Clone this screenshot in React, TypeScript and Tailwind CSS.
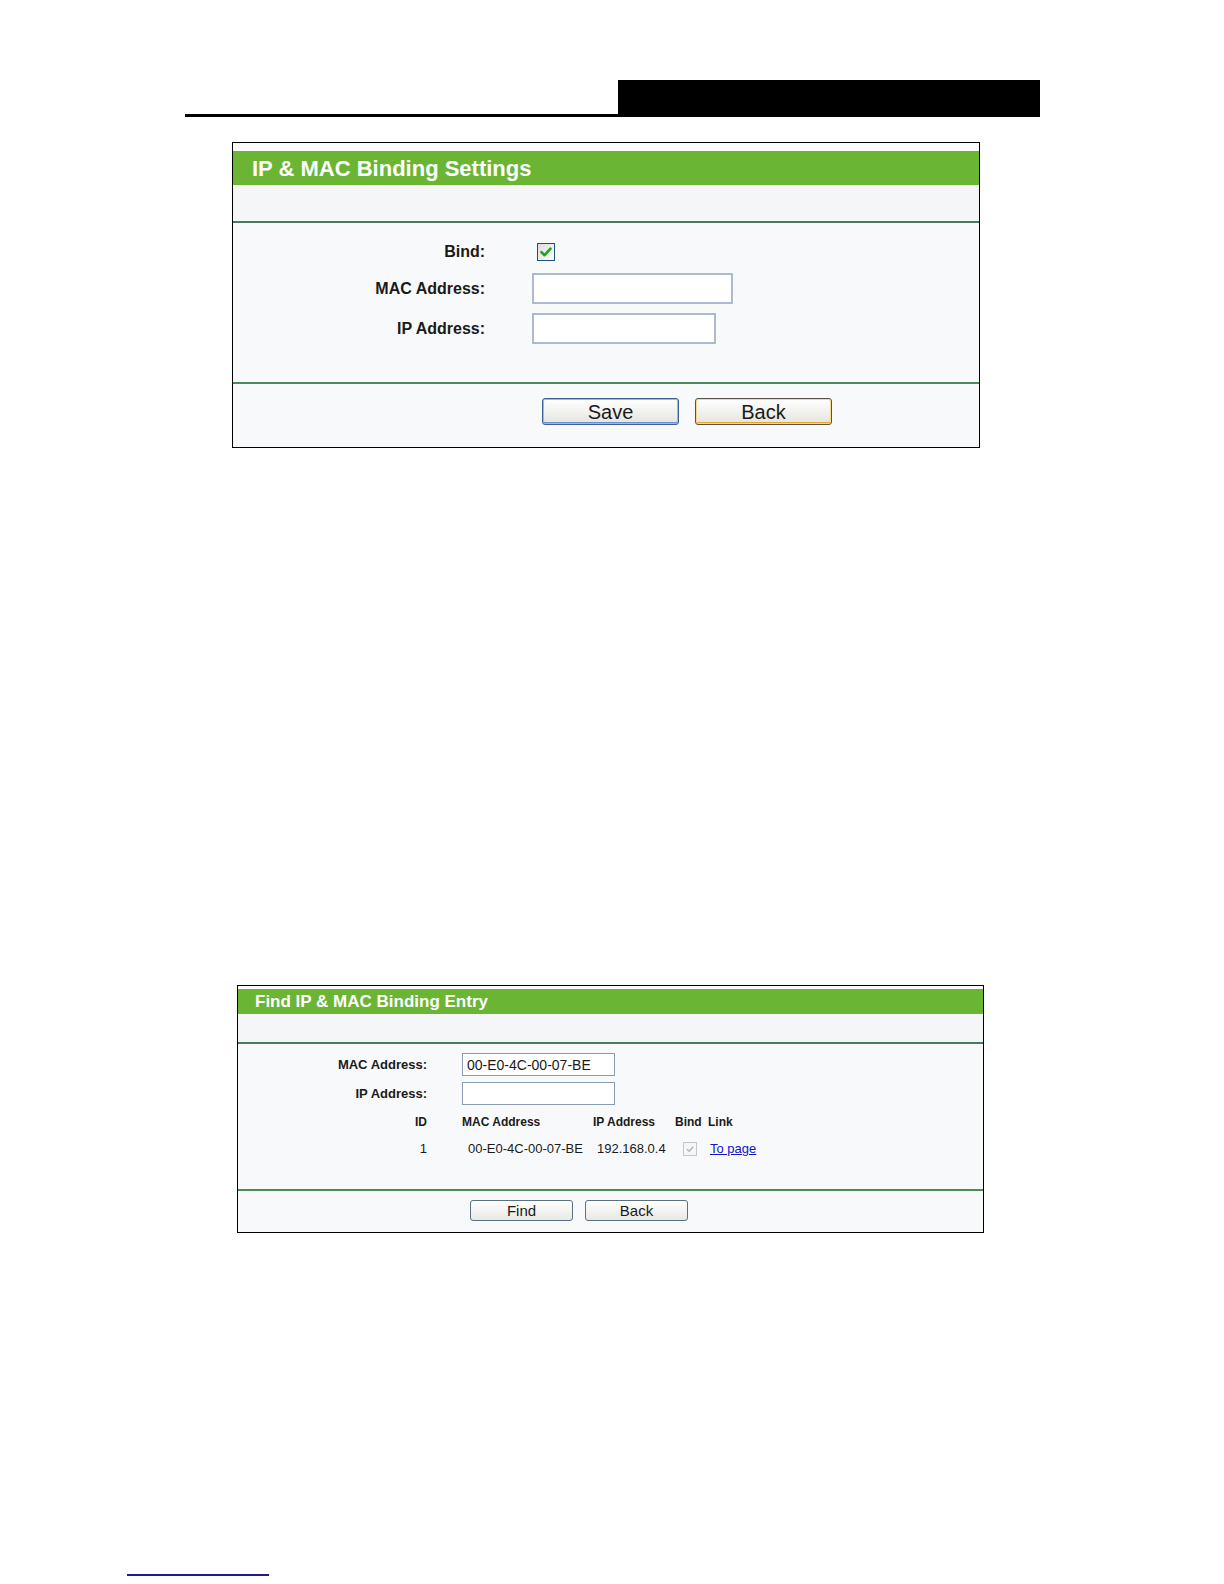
import React from 'react'

const font = "font-['Liberation_Sans',Arial,sans-serif]"

const CheckBox = () => (
  <span className="flex h-[18px] w-[18px] items-center justify-center border border-[#1f4f7f] bg-gradient-to-br from-[#dcdcdc] to-white">
    <svg width="14" height="14" viewBox="0 0 14 14">
      <path d="M2.5 7.2 L5.6 10.2 L11.5 3.6" fill="none" stroke="#23a324" strokeWidth="2.6" strokeLinecap="round" strokeLinejoin="round" />
    </svg>
  </span>
)

const DisabledCheck = () => (
  <span className="flex h-[14px] w-[14px] items-center justify-center border border-[#c6c6c6] bg-[#f6f6f6]">
    <svg width="10" height="10" viewBox="0 0 10 10">
      <path d="M2 5.2 L4.2 7.3 L8.2 2.8" fill="none" stroke="#b4b4b4" strokeWidth="1.4" />
    </svg>
  </span>
)

const BigButton = ({ label, tone }: { label: string; tone: 'blue' | 'orange' }) => (
  <button
    className={`h-[27px] w-[137px] rounded-[3px] border bg-gradient-to-b from-white to-[#e4e4de] text-[20px] leading-none text-[#1a1a1a] ${
      tone === 'blue'
        ? 'border-[#3c5f95] shadow-[inset_0_0_0_1px_#9ab8ea,inset_0_-2px_0_#6a8fd4]'
        : 'border-[#5a5446] shadow-[inset_0_0_0_1px_#f7d88a,inset_0_-2px_0_#eba52a]'
    }`}
  >
    {label}
  </button>
)

const SmallButton = ({ label }: { label: string }) => (
  <button className="h-[21px] w-[103px] rounded-[3px] border border-[#5d6f82] bg-gradient-to-b from-white to-[#e8e8e4] text-[15px] leading-none text-[#1a1a1a]">
    {label}
  </button>
)

export default function App() {
  return (
    <div className={`min-h-[1584px] w-[1224px] bg-white ${font}`}>
      {/* page header rule */}
      <div className="flex items-end pl-[185px] pt-[80px]">
        <div className="h-[3px] w-[433px] bg-black" />
        <div className="h-[37px] w-[422px] bg-black" />
      </div>

      {/* IP & MAC Binding Settings */}
      <div className="ml-[232px] mt-[25px] w-[748px] border border-black bg-[#f8f9fa]">
        <div className="h-[8px] bg-[#fcfbf9]" />
        <div className="flex h-[34px] items-center bg-[#6ab534] pl-[19px] text-[22px] font-bold text-white">
          IP &amp; MAC Binding Settings
        </div>
        <div className="h-[36px] bg-[#f5f6f7]" />
        <div className="h-[2px] bg-[#477c5f]" />

        <div className="pb-[38px] pt-[16px] text-[16px] font-bold text-[#1a1a1a]">
          <div className="flex h-[26px] items-center">
            <span className="w-[252px] text-right">Bind:</span>
            <span className="ml-[52px]"><CheckBox /></span>
          </div>
          <div className="mt-[8px] flex items-center">
            <span className="w-[252px] text-right">MAC Address:</span>
            <input className="ml-[47px] h-[31px] w-[201px] border-2 border-[#adbad0] bg-white outline-none" />
          </div>
          <div className="mt-[9px] flex items-center">
            <span className="w-[252px] text-right">IP Address:</span>
            <input className="ml-[47px] h-[31px] w-[184px] border-2 border-[#adbad0] bg-white outline-none" />
          </div>
        </div>

        <div className="h-[2px] bg-[#4b8b57]" />
        <div className="flex gap-[16px] pb-[22px] pl-[309px] pt-[14px]">
          <BigButton label="Save" tone="blue" />
          <BigButton label="Back" tone="orange" />
        </div>
      </div>

      {/* Find IP & MAC Binding Entry */}
      <div className="ml-[237px] mt-[537px] w-[747px] border border-black bg-[#f8f9fa]">
        <div className="h-[3px] bg-[#fcfbf9]" />
        <div className="flex h-[25px] items-center bg-[#6ab534] pl-[17px] text-[17px] font-bold text-white">
          Find IP &amp; MAC Binding Entry
        </div>
        <div className="h-[28px] bg-[#f5f6f7]" />
        <div className="h-[2px] bg-[#477c5f]" />

        <div className="pb-[30px] pt-[9px] text-[#1a1a1a]">
          <div className="flex items-center">
            <span className="w-[189px] text-right text-[13px] font-bold">MAC Address:</span>
            <input
              readOnly
              value="00-E0-4C-00-07-BE"
              className="ml-[35px] h-[23px] w-[153px] border border-[#8a9bb0] bg-white px-[4px] text-[14px] text-[#1a1a1a] outline-none"
            />
          </div>
          <div className="mt-[6px] flex items-center">
            <span className="w-[189px] text-right text-[13px] font-bold">IP Address:</span>
            <input className="ml-[35px] h-[23px] w-[153px] border border-[#8a9bb0] bg-white outline-none" />
          </div>

          <div className="mt-[7px] flex h-[20px] items-center text-[12px] font-bold">
            <span className="w-[189px] text-right">ID</span>
            <span className="ml-[35px] w-[131px]">MAC Address</span>
            <span className="w-[82px]">IP Address</span>
            <span className="w-[33px]">Bind</span>
            <span>Link</span>
          </div>
          <div className="mt-[7px] flex h-[20px] items-center text-[13px]">
            <span className="w-[189px] text-right">1</span>
            <span className="ml-[35px] w-[131px] pl-[6px]">00-E0-4C-00-07-BE</span>
            <span className="w-[82px] pl-[4px]">192.168.0.4</span>
            <span className="w-[33px] pl-[8px]"><DisabledCheck /></span>
            <a className="pl-[2px] text-[#1414c8] underline">To page</a>
          </div>
        </div>

        <div className="h-[2px] bg-[#4b8b57]" />
        <div className="flex gap-[12px] pb-[11px] pl-[232px] pt-[9px]">
          <SmallButton label="Find" />
          <SmallButton label="Back" />
        </div>
      </div>

      {/* footer link rule */}
      <div className="ml-[127px] mt-[341px] h-[2px] w-[142px] bg-[#1c1c92]" />
    </div>
  )
}
